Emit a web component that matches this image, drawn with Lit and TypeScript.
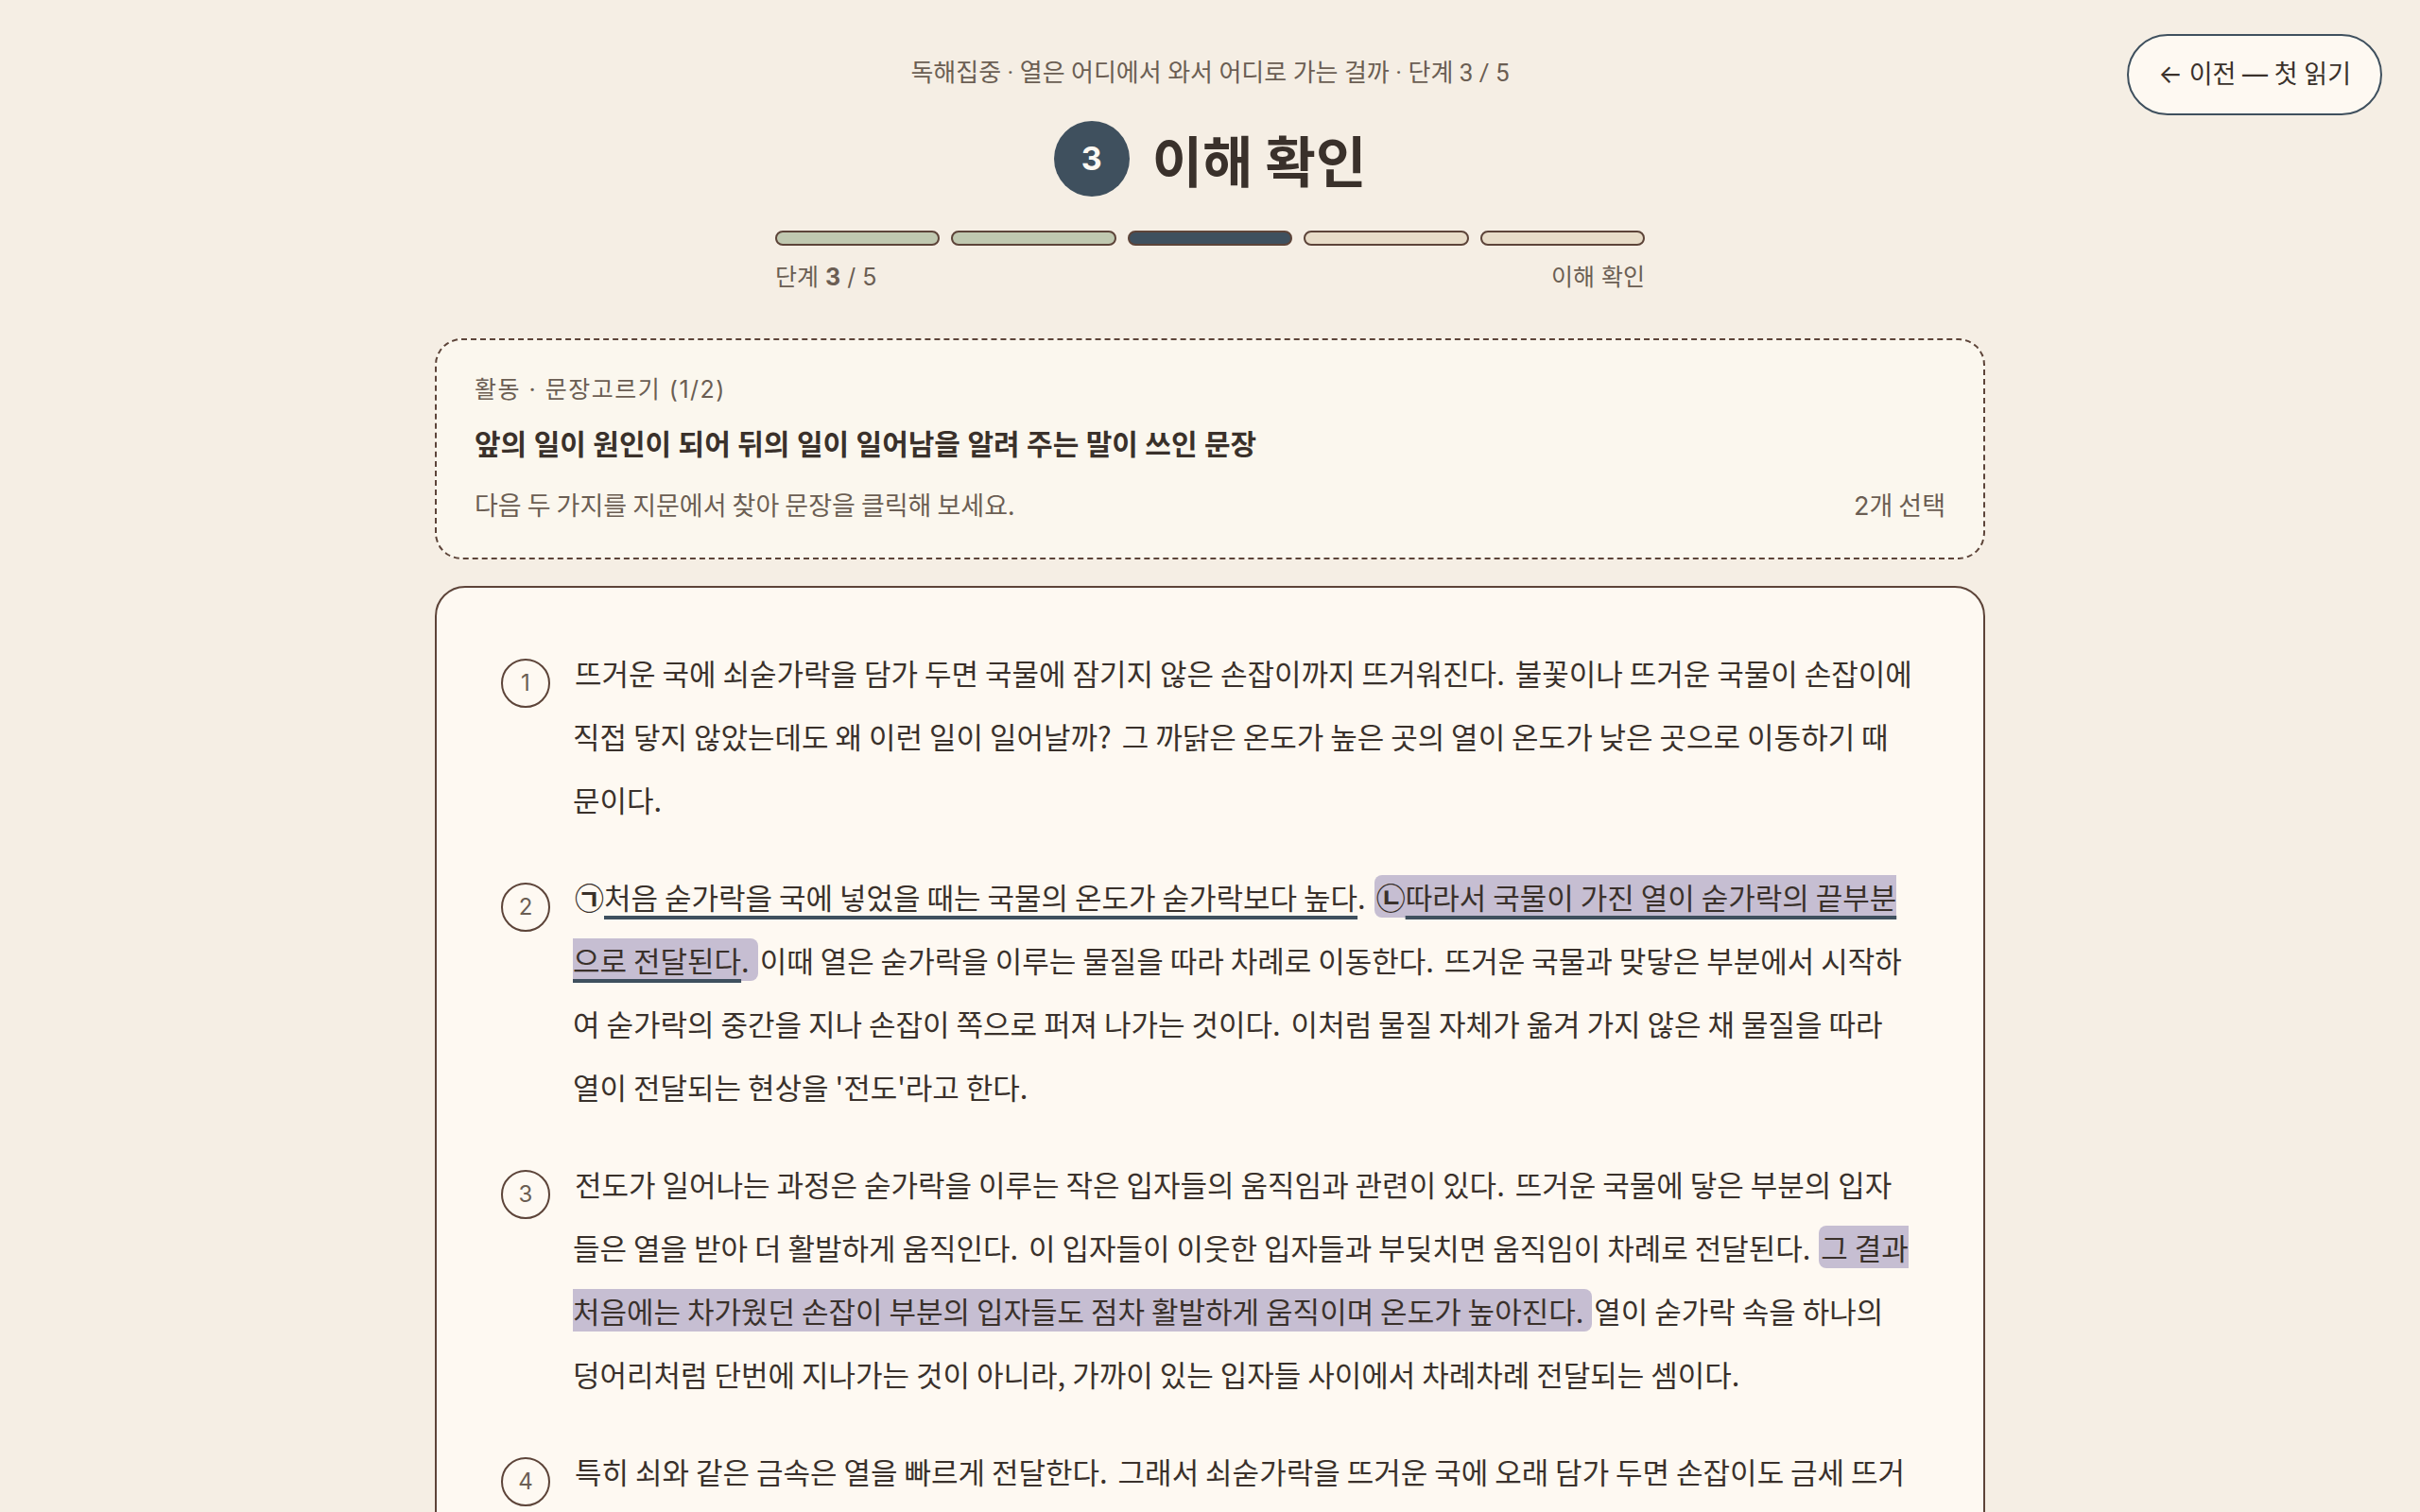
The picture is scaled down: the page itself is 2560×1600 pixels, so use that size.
import { LitElement, html, css } from "lit";
import { customElement, property, state } from "lit/decorators.js";
import { classMap } from "lit/directives/class-map.js";

interface Sentence {
  id: string;
  text: string;
  sign?: string;
}

interface Paragraph {
  no: number;
  sentences: Sentence[];
}

const STEPS = ["done", "done", "current", "todo", "todo"];

const PASSAGE: Paragraph[] = [
  {
    no: 1,
    sentences: [
      { id: "1-1", text: "뜨거운 국에 쇠숟가락을 담가 두면 국물에 잠기지 않은 손잡이까지 뜨거워진다." },
      { id: "1-2", text: "불꽃이나 뜨거운 국물이 손잡이에 직접 닿지 않았는데도 왜 이런 일이 일어날까?" },
      { id: "1-3", text: "그 까닭은 온도가 높은 곳의 열이 온도가 낮은 곳으로 이동하기 때문이다." },
    ],
  },
  {
    no: 2,
    sentences: [
      { id: "2-1", sign: "㉠", text: "처음 숟가락을 국에 넣었을 때는 국물의 온도가 숟가락보다 높다." },
      { id: "2-2", sign: "㉡", text: "따라서 국물이 가진 열이 숟가락의 끝부분으로 전달된다." },
      { id: "2-3", text: "이때 열은 숟가락을 이루는 물질을 따라 차례로 이동한다." },
      { id: "2-4", text: "뜨거운 국물과 맞닿은 부분에서 시작하여 숟가락의 중간을 지나 손잡이 쪽으로 퍼져 나가는 것이다." },
      { id: "2-5", text: "이처럼 물질 자체가 옮겨 가지 않은 채 물질을 따라 열이 전달되는 현상을 '전도'라고 한다." },
    ],
  },
  {
    no: 3,
    sentences: [
      { id: "3-1", text: "전도가 일어나는 과정은 숟가락을 이루는 작은 입자들의 움직임과 관련이 있다." },
      { id: "3-2", text: "뜨거운 국물에 닿은 부분의 입자들은 열을 받아 더 활발하게 움직인다." },
      { id: "3-3", text: "이 입자들이 이웃한 입자들과 부딪치면 움직임이 차례로 전달된다." },
      { id: "3-4", text: "그 결과 처음에는 차가웠던 손잡이 부분의 입자들도 점차 활발하게 움직이며 온도가 높아진다." },
      { id: "3-5", text: "열이 숟가락 속을 하나의 덩어리처럼 단번에 지나가는 것이 아니라, 가까이 있는 입자들 사이에서 차례차례 전달되는 셈이다." },
    ],
  },
  {
    no: 4,
    sentences: [
      { id: "4-1", text: "특히 쇠와 같은 금속은 열을 빠르게 전달한다." },
      { id: "4-2", text: "그래서 쇠숟가락을 뜨거운 국에 오래 담가 두면 손잡이도 금세 뜨거" },
    ],
  },
];

@customElement("step-progress")
export class StepProgress extends LitElement {
  @property({ type: Number }) step = 3;
  @property() label = "";

  static styles = css`
    :host {
      display: block;
    }
    .track {
      display: flex;
      gap: 12px;
    }
    .segment {
      flex: 1;
      box-sizing: border-box;
      height: 16px;
      border: 2px solid #5d4439;
      border-radius: 8px;
      background: #e8dcc8;
    }
    .segment.done {
      background: #c0c8b0;
    }
    .segment.current {
      background: #3f505e;
    }
    .captions {
      display: flex;
      justify-content: space-between;
      margin-top: 16px;
      font-family: Inter, "Noto Sans CJK KR", sans-serif;
      font-size: 25px;
      line-height: 34px;
      color: #6b5e53;
    }
  `;

  render() {
    return html`
      <div class="track">
        ${STEPS.map((s) => html`<div class="segment ${s}"></div>`)}
      </div>
      <div class="captions">
        <span>단계 <strong>${this.step}</strong> / ${STEPS.length}</span>
        <span>${this.label}</span>
      </div>
    `;
  }
}

@customElement("reading-passage")
export class ReadingPassage extends LitElement {
  @state() private selected = new Set(["2-2", "3-4"]);

  static styles = css`
    :host {
      display: block;
      box-sizing: border-box;
      padding: 56px 74px 58px 68px;
      border: 2px solid #5d4439;
      border-radius: 32px;
      background: #fef9f2;
    }
    .paragraph {
      display: flex;
      gap: 24px;
    }
    .paragraph + .paragraph {
      margin-top: 36px;
    }
    .number {
      flex: none;
      box-sizing: border-box;
      width: 52px;
      height: 52px;
      margin-top: 19px;
      border: 2px solid #5d4439;
      border-radius: 50%;
      font-family: Inter, sans-serif;
      font-size: 24px;
      line-height: 48px;
      text-align: center;
      color: #6b5e53;
    }
    .body {
      flex: 1;
      margin: 0;
      font-family: "Noto Sans CJK KR", sans-serif;
      font-size: 31px;
      line-height: 67px;
      color: #3a312b;
    }
    .sentence {
      padding: 0 2px;
      border-radius: 8px;
      cursor: pointer;
    }
    .sentence.selected {
      background: #c6bed2;
    }
    .sign {
      font-weight: 700;
    }
    .underlined {
      text-decoration: underline 4px #3f505e;
      text-decoration-skip-ink: none;
      text-underline-offset: 7px;
    }
  `;

  private toggle(id: string) {
    const next = new Set(this.selected);
    if (!next.delete(id)) next.add(id);
    this.selected = next;
  }

  private sentence(s: Sentence) {
    const content = s.sign
      ? html`<span class="sign">${s.sign}</span><span class="underlined">${s.text.slice(0, -1)}</span>${s.text.slice(-1)}`
      : s.text;
    return html`<span
      class=${classMap({ sentence: true, selected: this.selected.has(s.id) })}
      @click=${() => this.toggle(s.id)}
      >${content}${" "}</span
    >`;
  }

  render() {
    return PASSAGE.map(
      (p) => html`
        <section class="paragraph">
          <span class="number">${p.no}</span>
          <p class="body">${p.sentences.map((s) => this.sentence(s))}</p>
        </section>
      `
    );
  }
}

@customElement("app-root")
export class AppRoot extends LitElement {
  static styles = css`
    :host {
      display: block;
      height: 100vh;
      overflow-y: auto;
      scrollbar-width: none;
      background: #f5eee4;
      color: #3a312b;
      font-family: Roboto, "Noto Sans CJK KR", sans-serif;
    }
    .back {
      position: absolute;
      top: 36px;
      right: 40px;
      height: 86px;
      padding: 0 31px;
      border: 2px solid #3f505e;
      border-radius: 43px;
      background: #fef9f2;
      color: #3a312b;
      font-family: inherit;
      font-size: 27px;
      line-height: 40px;
      cursor: pointer;
    }
    .symbol {
      font-family: Inter, sans-serif;
      line-height: 1;
    }
    .page {
      box-sizing: border-box;
      max-width: 1640px;
      margin: 0 auto;
      padding: 57px 0;
    }
    .header {
      display: flex;
      flex-direction: column;
      align-items: center;
    }
    .crumbs {
      margin: 0;
      font-size: 26px;
      line-height: 40px;
      color: #6b5e53;
    }
    .title {
      display: flex;
      align-items: center;
      gap: 24px;
      margin: 31px 0 36px;
      font-family: "Noto Sans CJK KR", sans-serif;
      font-size: 58px;
      line-height: 80px;
      font-weight: 700;
    }
    .badge {
      width: 80px;
      height: 80px;
      border-radius: 50%;
      background: #3f505e;
      color: #fef9f2;
      font-family: Inter, sans-serif;
      font-size: 34px;
      text-align: center;
    }
    .progress {
      width: 100%;
      max-width: 920px;
    }
    .activity {
      display: flex;
      flex-direction: column;
      gap: 18px;
      margin: 48px 0 28px;
      padding: 34px 40px;
      border: 2px dashed #5d4439;
      border-radius: 28px;
      background: #fbf7ee;
    }
    .kind {
      margin: 0;
      font-family: Inter, "Noto Sans CJK KR", sans-serif;
      font-size: 25px;
      line-height: 36px;
      letter-spacing: 0.06em;
      color: #6b5e53;
    }
    .question {
      margin: 0;
      font-size: 30px;
      line-height: 46px;
      font-weight: 700;
    }
    .guide {
      display: flex;
      justify-content: space-between;
      font-family: "Noto Sans CJK KR", sans-serif;
      font-size: 27px;
      line-height: 44px;
      color: #6b5e53;
    }
  `;

  render() {
    return html`
      <button class="back" type="button">
        <span class="symbol">←</span> 이전 <span class="symbol">—</span> 첫 읽기
      </button>
      <main class="page">
        <header class="header">
          <p class="crumbs">독해집중 · 열은 어디에서 와서 어디로 가는 걸까 · 단계 3 / 5</p>
          <h1 class="title"><span class="badge">3</span>이해 확인</h1>
          <step-progress class="progress" .step=${3} label="이해 확인"></step-progress>
        </header>
        <section class="activity">
          <p class="kind">활동 · 문장고르기 (1/2)</p>
          <h2 class="question">앞의 일이 원인이 되어 뒤의 일이 일어남을 알려 주는 말이 쓰인 문장</h2>
          <div class="guide">
            <span>다음 두 가지를 지문에서 찾아 문장을 클릭해 보세요.</span>
            <span><span class="symbol">2</span>개 선택</span>
          </div>
        </section>
        <reading-passage></reading-passage>
      </main>
    `;
  }
}
